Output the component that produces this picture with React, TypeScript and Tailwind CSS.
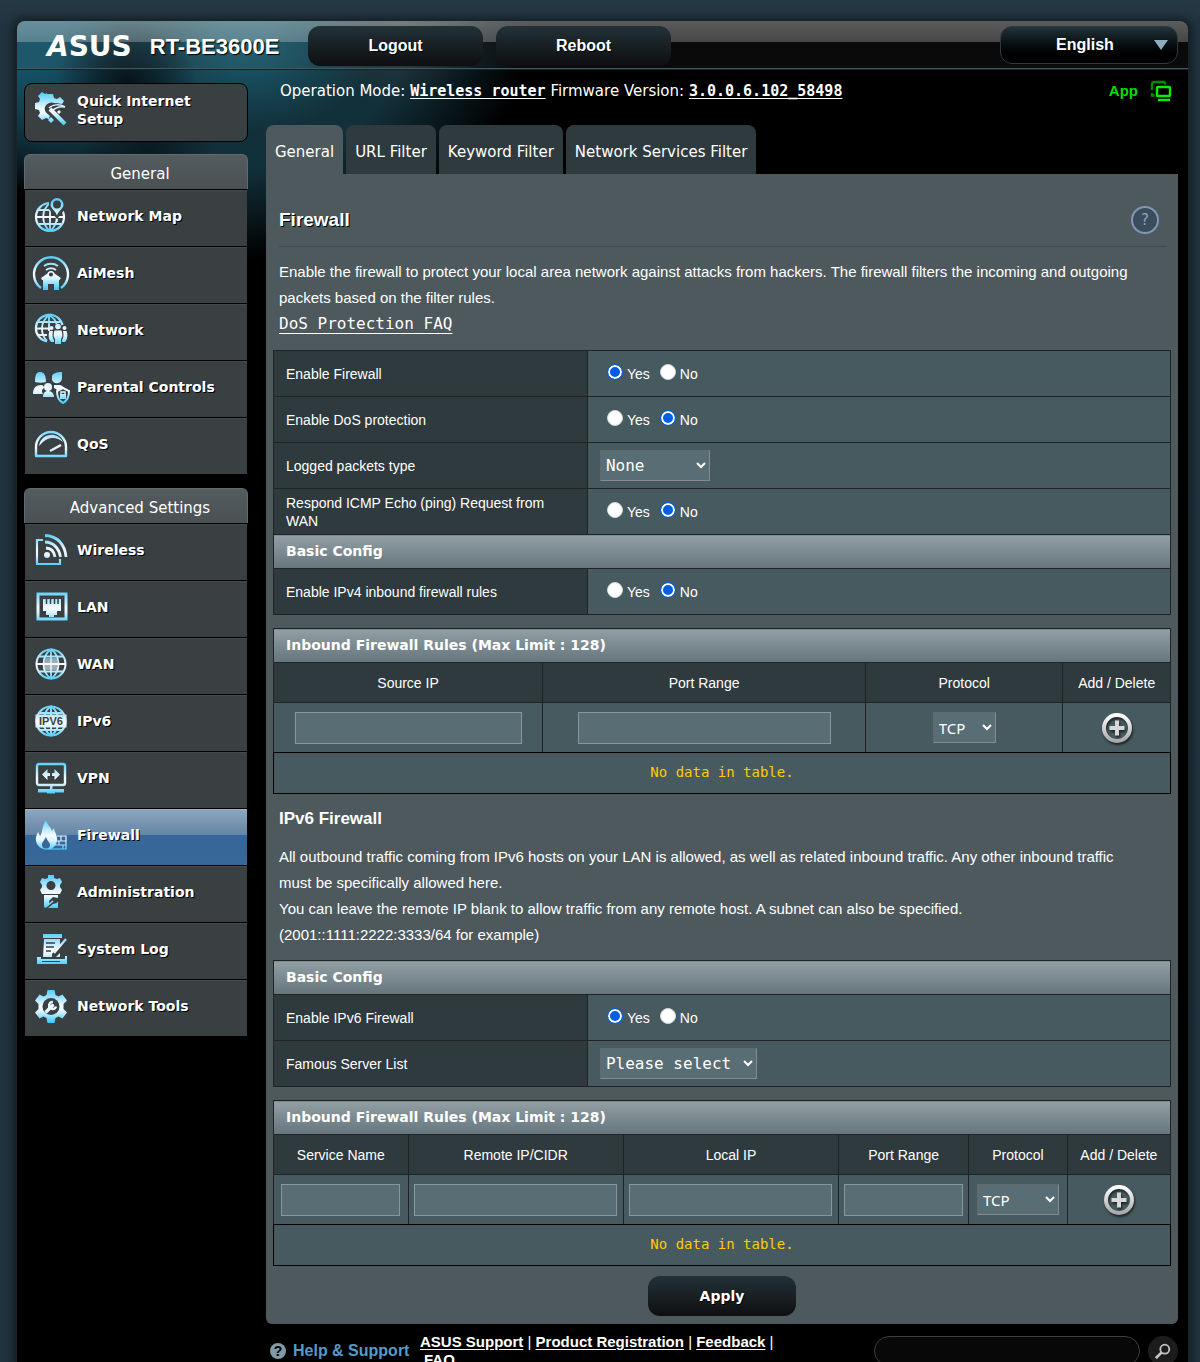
import React from "react";

const sans = "font-['Liberation_Sans',Arial,sans-serif]";
const wide = "font-['DejaVu_Sans',Verdana,sans-serif]";
const mono = "font-['DejaVu_Sans_Mono','Lucida_Console',monospace]";
const G = "url(#ice)";

const Gradients = () => (
  <svg width="0" height="0" className="absolute" aria-hidden="true">
    <defs>
      <linearGradient id="ice" gradientUnits="userSpaceOnUse" x1="0" y1="3" x2="0" y2="35">
        <stop offset="0" stopColor="#55cdf8" />
        <stop offset="0.5" stopColor="#f4faff" />
        <stop offset="0.65" stopColor="#e4f6ff" />
        <stop offset="1" stopColor="#3fccff" />
      </linearGradient>
      <linearGradient id="silver" x1="0" y1="0" x2="0" y2="1">
        <stop offset="0" stopColor="#ffffff" />
        <stop offset="1" stopColor="#a9a9a9" />
      </linearGradient>
    </defs>
  </svg>
);

const Icon = ({ children }: { children: React.ReactNode }) => (
  <svg viewBox="0 0 38 38" className="mb-0.5 size-[38px] shrink-0 [text-shadow:none]" fill="none" stroke={G} strokeWidth="2" aria-hidden="true">
    {children}
  </svg>
);

const gear = "M15.500 3h7l1 5 3 1.500 4-2 4.500 6-3.500 3.500v5l3.500 3.500-4.500 6-4-2-3 1.500-1 5h-7l-1-5-3-1.500-4 2-4.500-6 3.500-3.500v-5l-3.500-3.500 4.500-6 4 2 3-1.500z";

const icons: Record<string, React.ReactNode> = {
  setup: (
    <>
      <path fill={G} stroke="none" d="M15 4h6l1 4 3 1 3-2 4 4-2 3-6-1-7 3-2 5 3 4-1 4-3-1-4 2-4-4 2-3-1-3-4-1v-6l4-1 1-3-2-3 4-4 3 2 2-1z" />
      <path fill="#3a3f41" stroke="none" d="M13 17c2-5 9-6 12-2l8 1-5 3 5 12-4 3-12-9c-3-2-5-5-4-8z" />
      <path d="M18 19l15 15" strokeWidth="4" />
      <path d="M17 18c4-4 11-4 16-1-5-1-9 0-13 4" strokeWidth="1.500" />
      <path fill={G} stroke="none" d="M19 27l3 3-3 3-3-3zM27 20l2 2-2 2-2-2z" />
    </>
  ),
  map: (
    <>
      <circle cx="18" cy="20" r="14" strokeWidth="2.200" />
      <path d="M18 6v28M4 20h28M7 13h18M7 27h22M18 6c-9 7-9 21 0 28M18 6c9 7 9 21 0 28" strokeWidth="1.800" />
      <path fill="#3a3f41" stroke="none" d="M17 0h17v11l-9 11-8-10z" />
      <path fill={G} stroke="none" fillRule="evenodd" d="M25 1a6.500 6.500 0 0 1 6.500 6.500c0 4-5 6-6.500 11-1.500-5-6.500-7-6.500-11a6.500 6.500 0 0 1 6.500-6.500zm0 2.500a4 4 0 1 0 0 8 4 4 0 0 0 0-8z" />
      <path d="M25 22v3M22 27h7" strokeWidth="1.600" />
    </>
  ),
  aimesh: (
    <>
      <path d="M9 34A17 17 0 1 1 29 34" strokeWidth="2.400" />
      <path d="M12 12c4-3 10-3 14 0M14 16c3-2 7-2 10 0" strokeWidth="2" />
      <path fill={G} stroke="none" d="M19 17l10 7-1.500 2H27v10h-5v-6h-6v6h-5V26H10l-1-2z" />
      <circle cx="19" cy="20.500" r="2.800" fill="#3a3f41" strokeWidth="1.500" />
    </>
  ),
  network: (
    <>
      <path d="M15 30.500A13.500 13.500 0 1 1 30.500 14" strokeWidth="2.200" />
      <path d="M17 4v16M4 17.500h14M6 11h22M6 24h9M17 4c-9 7-9 19-2 26M17 4c5 3 7 6 7.500 9" strokeWidth="1.800" />
      <g fill={G} stroke="none">
        <circle cx="26" cy="15.500" r="2.800" />
        <circle cx="19.500" cy="17" r="2" />
        <circle cx="32.500" cy="17" r="2" />
        <path d="M22.500 19.500h7c1.500 4 1 7-.5 8.500V33h-6v-5c-1.500-1.500-2-4.500-.5-8.500zM17.500 20H21c-1 4-.5 7 1 9v2h-3c-2.500-2-3-8-1.500-11zM31 20h3.500c1.500 3 1 9-1.500 11h-3v-2c1.500-2 2-5 1-9z" />
      </g>
    </>
  ),
  parental: (
    <g fill={G} stroke="none">
      <path d="M3 14c0-8 2-10 5-10s6 2 6 10c-3 1-7 1-11 0zM20 8c1-3 5-4 10-4v7c-1 5-8 6-10 1z" />
      <path d="M1 26c0-6 3-9 8-9 2 0 3 1 3 3-3 2-2 4-1 6zM22 17h5c3 0 5 2 5 4l-6 4c0-3-2-4-4-5z" />
      <circle cx="16" cy="19" r="4" />
      <path d="M11 29c0-4 2-6 5-6s6 2 6 6z" />
      <path fill="#3a3f41" stroke={G} strokeWidth="2" d="M31 20l6 3c0 6-2 10-6 12-4-2-6-6-6-12z" />
      <rect x="28" y="26" width="6" height="5" />
      <path fill="none" stroke={G} strokeWidth="1.400" d="M29 27v-3h4v3" />
    </g>
  ),
  qos: (
    <>
      <path d="M4 31h30v-9a15 15 0 0 0-30 0z" strokeWidth="2.400" strokeLinejoin="round" />
      <path fill={G} stroke="none" d="M7 21c2-13 18-15 24-4-7-6-16-6-24 4z" />
      <path d="M18 26l11-6" strokeWidth="2.400" />
    </>
  ),
  wireless: (
    <>
      <path d="M11 9H5v24h23v-5" strokeWidth="2.200" />
      <circle cx="15" cy="24" r="3" fill={G} stroke="none" />
      <path d="M14 17c5 0 8 3 9 9M13 11c8 0 14 6 15.500 15M13 4.500c12 0 20 9 21 21.500" strokeWidth="2.800" />
    </>
  ),
  lan: (
    <>
      <rect x="6" y="6" width="28" height="25" strokeWidth="3" />
      <path fill={G} stroke="none" d="M11 11h18v12h-4v4h-3v2h-5v-2h-3v-4h-3z" />
      <path d="M14.500 10v6M18.500 10v6M22.500 10v6M26 10v6" stroke="#3a3f41" strokeWidth="1.500" />
    </>
  ),
  wan: (
    <>
      <circle cx="19" cy="19" r="14.500" />
      <path d="M19 4v30M4 19h30M7 11.500h24M7 26.500h24M19 4c-10 8-10 22 0 30M19 4c10 8 10 22 0 30" strokeWidth="1.800" />
      <path fill={G} stroke="none" opacity="0.6" d="M13 13h5v5h-5.500zM20 13h5l.5 5H20zM12.500 20H18v5h-5zM20 20h5.500l-.5 5h-5z" />
    </>
  ),
  ipv6: (
    <>
      <circle cx="19" cy="19" r="14.500" strokeWidth="2.200" />
      <path d="M19 4v30M7 11h24M7 28h24M19 4c-10 8-10 22 0 30M19 4c10 8 10 22 0 30" />
      <rect x="3.500" y="12.500" width="31" height="13" fill={G} stroke="none" />
      <text x="19" y="23" textAnchor="middle" fontSize="11" fontWeight="700" fontFamily="Liberation Sans" fill="#3a3f41" stroke="none">IPV6</text>
    </>
  ),
  vpn: (
    <>
      <rect x="5" y="5" width="28" height="21" rx="2" strokeWidth="2.400" />
      <path fill={G} stroke="none" d="M15.500 10v4H18v3h-2.500v4L10 15.500zM22.500 10v4H20v3h2.500v4l5.500-5.500zM18 26h2.500v4H32v3.500H23v1h-8v-1H6V30h12z" />
    </>
  ),
  firewall: (
    <>
      <path fill={G} stroke="none" fillRule="evenodd" d="M14 4c1 5 5 7 6 11l2-3c0 4 4 7 3 13-1 5-4 7-6 8h-7c-6-1-9-7-8-12l2-5 2 4c3-3 1-8 6-16zm0 17c-2 4-4 5-4 8 0 2 2 4 4 4s4-2 4-4c0-3-3-4-4-8z" />
      <path d="M25 20h9v13H12M24 25h10M23 29h11M29 20v5M27 25v4M31 29v4" strokeWidth="1.200" />
    </>
  ),
  admin: (
    <>
      <path fill={G} stroke="none" fillRule="evenodd" d="M16 2h6v3l3 1 3-1 2 4-2 3v2l2 3-2 4H10l-2-4 2-3v-2L8 9l2-4 3 1 3-1zm3 6a4.500 4.500 0 1 0 0 9 4.500 4.500 0 0 0 0-9z" />
      <path fill={G} stroke="none" d="M12 22h14v3l-5-1-4 4 .5 3L13 35l-1-1zM26 28v7H16l5-4 4-1z" />
      <path d="M14 34l7-6" strokeWidth="1.400" />
    </>
  ),
  log: (
    <>
      <path fill={G} stroke="none" d="M11 4h19v4H11zM12 9h16v6l-8 9v3h4l4-4v4H11z" />
      <path d="M14 13h9M14 17h8M14 21h5" stroke="#3a3f41" strokeWidth="1.500" />
      <path d="M22 23l12-14" strokeWidth="2.200" />
      <path fill={G} stroke="none" d="M5 27h4v2h24v-3h2v8H5z" />
      <path d="M10 31.500h18" stroke="#3a3f41" strokeWidth="1" />
    </>
  ),
  tools: (
    <>
      <path fill={G} stroke="none" d={gear} />
      <circle cx="19" cy="19.500" r="8.500" fill="#3a3f41" stroke="none" />
      <path d="M14.500 24.500l6-6" strokeWidth="3.400" strokeLinecap="round" />
      <path d="M21 15a3.500 3.500 0 1 0 3 4.500" strokeWidth="2.400" />
    </>
  ),
};

const general = [
  ["map", "Network Map"],
  ["aimesh", "AiMesh"],
  ["network", "Network"],
  ["parental", "Parental Controls"],
  ["qos", "QoS"],
];

const advanced = [
  ["wireless", "Wireless"],
  ["lan", "LAN"],
  ["wan", "WAN"],
  ["ipv6", "IPv6"],
  ["vpn", "VPN"],
  ["firewall", "Firewall"],
  ["admin", "Administration"],
  ["log", "System Log"],
  ["tools", "Network Tools"],
];

const Menu = ({ title, items }: { title: string; items: string[][] }) => (
  <nav className="mb-[14px]">
    <h2 className={`${wide} h-[35px] rounded-t-md border border-b-0 border-[#626a6d] bg-linear-to-b from-[#555c5f] to-[#4a5154] pt-1 pl-2 text-center text-[15px]/[30px]`}>
      {title}
    </h2>
    <ul className="mx-px">
      {items.map(([icon, label]) => (
        <li key={label} className="h-[57px] border-t border-black">
          <a
            href="#"
            className={`${wide} flex h-14 items-center gap-[7px] border-t pb-1 pl-[7px] text-[14px] font-bold [text-shadow:1px_1px_0_#000] ${
              label === "Firewall"
                ? "border-[#9fb4c6] bg-[linear-gradient(#8aa5be,#6485a6_46%,#37669a_46%,#376897)]"
                : "border-[#454a4c] bg-[#3a3f41]"
            }`}
          >
            <Icon>{icons[icon]}</Icon>
            {label}
          </a>
        </li>
      ))}
    </ul>
  </nav>
);

const YesNo = ({ name, label, value }: { name: string; label: string; value: "Yes" | "No" }) => (
  <div role="radiogroup" aria-label={label} className="flex items-center gap-[10px] pl-[7px]">
    {["Yes", "No"].map((opt) => (
      <label key={opt} className="flex items-center gap-1">
        <input
          type="radio"
          name={name}
          defaultChecked={opt === value}
          className="mb-[3px] size-4 appearance-none rounded-full border border-[#d5d8da] bg-white checked:border-[#005fe0] checked:bg-[#005fe0] checked:shadow-[inset_0_0_0_2px_#fff]"
        />
        {opt}
      </label>
    ))}
  </div>
);

const Row = ({ label, id, children }: { label: string; id?: string; children: React.ReactNode }) => (
  <tr className="h-[46px]">
    <th scope="row" className="w-[35%] border border-[#222] bg-[#2f3a3e] px-3 text-left text-[14px]/[18px] font-normal">
      {id ? <label htmlFor={id}>{label}</label> : label}
    </th>
    <td className="border border-[#222] bg-[#475a5f] px-3 text-[14px]/[18px]">{children}</td>
  </tr>
);

const Bar = ({ children, span }: { children: React.ReactNode; span: number }) => (
  <tr className="h-[34px]">
    <th
      colSpan={span}
      className={`${wide} border border-[#222] bg-linear-to-b from-[#92a0a5] to-[#66757c] px-3 text-left text-[14px] font-bold`}
    >
      {children}
    </th>
  </tr>
);

const selectStyle = "h-[31px] border border-t-[#5f6a6e] border-l-[#5f6a6e] border-[#8a8a8a] bg-[#596d74] px-px";
const HeadCell = ({ children }: { children: React.ReactNode }) => (
  <th scope="col" className="border border-[#222] bg-[#2f3a3e] text-[14px]/[18px] font-normal">{children}</th>
);
const Cell = ({ children }: { children: React.ReactNode }) => (
  <td className="border border-[#222] bg-[#475a5f] text-center">
    <div className="flex items-center justify-center">{children}</div>
  </td>
);
const Field = ({ label, width }: { label: string; width: string }) => (
  <input type="text" aria-label={label} className={`${width} h-8 border border-[#85989e] bg-[#596d74] px-1`} />
);

const AddButton = () => (
  <button type="button" aria-label="Add" className="size-8 drop-shadow-[1px_2px_1px_rgba(0,0,0,0.6)]">
    <svg viewBox="0 0 32 32" fill="none" stroke="url(#silver)">
      <circle cx="16" cy="16" r="13" strokeWidth="4" />
      <path fill="#d8d8d8" stroke="none" d="M14 8.500h4V14h5.500v4H18v5.500h-4V18H8.500v-4H14z" />
    </svg>
  </button>
);

const NoData = () => (
  <p className={`${mono} -mt-px h-[42px] border border-black bg-[#475a5f] text-center text-[14px]/[38px] text-[#ffcc00]`}>
    No data in table.
  </p>
);

const darkButton = "h-[40px] rounded-xl bg-linear-to-b from-[#233238] to-[#0e0f10] text-center font-bold [text-shadow:1px_1px_0_#000]";

const Header = () => (
  <header className="flex h-12 rounded-t-lg border-b border-[#3f5a63] bg-[linear-gradient(rgba(255,255,255,0.36),rgba(255,255,255,0.28)_21px,rgba(255,255,255,0.04)_21px,rgba(255,255,255,0.04))] shadow-[0_1px_0_#142328]">
    <div className="flex w-[291px] shrink-0 items-center gap-[18px] pt-1 pl-[30px]">
      <span className={`${wide} text-[28px]/[28px] font-bold`}><i>A</i>SUS</span>
      <span className="text-[22px]/[24px] font-bold [text-shadow:1px_1px_1px_#000]">RT-BE3600E</span>
    </div>
    <div className="flex flex-1 gap-[13px] pt-[5px]">
      <button type="button" className={`${darkButton} w-[175px]`}>Logout</button>
      <button type="button" className={`${darkButton} w-[175px]`}>Reboot</button>
    </div>
    <div className="relative mt-[5px] mr-[10px] h-[38px] w-[178px]">
      <select
        aria-label="Language"
        className="size-full appearance-none rounded-xl border border-[#2c3a3f] bg-linear-to-b from-[#22343a] to-black pr-2 [text-align-last:center] font-bold"
      >
        <option>English</option>
      </select>
      <svg viewBox="0 0 14 10" className="pointer-events-none absolute top-[14px] right-[10px] h-[10px] w-[14px]" fill="#8fa9bd">
        <path d="M0 0h14l-7 10z" />
      </svg>
    </div>
  </header>
);

const tabs = ["General", "URL Filter", "Keyword Filter", "Network Services Filter"];

const StatusLine = () => (
  <div className="flex items-center justify-between pt-[10px] pr-[6px] pl-[14px]">
    <p className={`${wide} text-[15px]/6`}>
      Operation Mode:{" "}
      <a href="#" className={`${mono} text-[15px] font-bold underline underline-offset-2`}>Wireless router</a>{" "}
      Firmware Version:{" "}
      <a href="#" className={`${mono} text-[15px] font-bold underline underline-offset-2`}>3.0.0.6.102_58498</a>
    </p>
    <a href="#" className="flex items-center gap-3 text-[15px] font-bold text-[#00dd00]">
      App
      <svg viewBox="0 0 22 22" className="size-[22px]" fill="none" stroke="#00f000" strokeWidth="2.400">
        <rect x="7" y="7" width="13" height="9" rx="1" />
        <path d="M8 20h12" />
        <path d="M15 4.500V3q0-1-1-1H4Q2 2 2 4v6M2 13v2.500h2.500" stroke="#008a00" />
      </svg>
    </a>
  </div>
);

const Firewall = () => (
  <main className="rounded-b-md bg-[#4d595d] px-[7px] pb-[8px]">
    <div className="mx-1.5 mr-1 flex items-center justify-between border-b border-[#3f4a4e] pt-[32px] pr-[8px] pb-[12px]">
      <h1 className="text-[19px]/6 font-bold [text-shadow:1px_1px_0_#000]">Firewall</h1>
      <button type="button" aria-label="Help" className={`${wide} size-[28px] rounded-full border-2 border-[#8197b5] bg-[#3b4d5c] text-[15px]/[24px] text-[#8da3c2]`}>
        ?
      </button>
    </div>
    <p className="mt-3 pr-6 pl-1.5 text-[15px]/[26px]">
      Enable the firewall to protect your local area network against attacks from hackers. The firewall filters the incoming and outgoing packets based on the filter rules.
      <br />
      <a href="#" className={`${mono} text-[16px] underline underline-offset-4`}>DoS Protection FAQ</a>
    </p>

    <table className="mt-[13px] w-full border-collapse">
      <tbody>
        <Row label="Enable Firewall"><YesNo name="fw" label="Enable Firewall" value="Yes" /></Row>
        <Row label="Enable DoS protection"><YesNo name="dos" label="Enable DoS protection" value="No" /></Row>
        <Row label="Logged packets type" id="logged">
          <select id="logged" className={`${selectStyle} ${mono} w-[110px] text-[16px]`}>
            <option>None</option>
          </select>
        </Row>
        <Row label="Respond ICMP Echo (ping) Request from WAN"><YesNo name="ping" label="Respond to ping" value="No" /></Row>
        <Bar span={2}>Basic Config</Bar>
        <Row label="Enable IPv4 inbound firewall rules"><YesNo name="v4" label="Enable IPv4 inbound firewall rules" value="No" /></Row>
      </tbody>
    </table>

    <table className="mt-[13px] w-full table-fixed border-collapse">
      <colgroup>
        <col className="w-[30%]" />
        <col className="w-[36%]" />
        <col className="w-[22%]" />
        <col className="w-[12%]" />
      </colgroup>
      <thead>
        <Bar span={4}>Inbound Firewall Rules (Max Limit : 128)</Bar>
        <tr className="h-10">
          <HeadCell>Source IP</HeadCell>
          <HeadCell>Port Range</HeadCell>
          <HeadCell>Protocol</HeadCell>
          <HeadCell>Add / Delete</HeadCell>
        </tr>
      </thead>
      <tbody>
        <tr className="h-[50px]">
          <Cell><Field label="Source IP" width="w-[227px]" /></Cell>
          <Cell><Field label="Port Range" width="w-[253px]" /></Cell>
          <Cell>
            <select aria-label="Protocol" className={`${selectStyle} w-[63px] font-['Noto_Sans',sans-serif] text-[15px]`}>
              <option>TCP</option>
            </select>
          </Cell>
          <Cell><AddButton /></Cell>
        </tr>
      </tbody>
    </table>
    <NoData />

    <h2 className="mt-3 px-1.5 text-[17px]/[26px] font-bold">IPv6 Firewall</h2>
    <p className="mt-3 pr-6 pl-1.5 text-[15px]/[26px]">
      All outbound traffic coming from IPv6 hosts on your LAN is allowed, as well as related inbound traffic. Any other inbound traffic must be specifically allowed here.
      <br />
      You can leave the remote IP blank to allow traffic from any remote host. A subnet can also be specified.
      <br />
      (2001::1111:2222:3333/64 for example)
    </p>

    <table className="mt-3 w-full border-collapse">
      <tbody>
        <Bar span={2}>Basic Config</Bar>
        <Row label="Enable IPv6 Firewall"><YesNo name="v6" label="Enable IPv6 Firewall" value="Yes" /></Row>
        <Row label="Famous Server List" id="famous">
          <select id="famous" className={`${selectStyle} ${mono} w-[157px] text-[16px]`}>
            <option>Please select</option>
          </select>
        </Row>
      </tbody>
    </table>

    <table className="mt-[13px] w-full table-fixed border-collapse">
      <colgroup>
        <col className="w-[15%]" />
        <col className="w-[24%]" />
        <col className="w-[24%]" />
        <col className="w-[14.500%]" />
        <col className="w-[11%]" />
        <col className="w-[11.500%]" />
      </colgroup>
      <thead>
        <Bar span={6}>Inbound Firewall Rules (Max Limit : 128)</Bar>
        <tr className="h-10">
          <HeadCell>Service Name</HeadCell>
          <HeadCell>Remote IP/CIDR</HeadCell>
          <HeadCell>Local IP</HeadCell>
          <HeadCell>Port Range</HeadCell>
          <HeadCell>Protocol</HeadCell>
          <HeadCell>Add / Delete</HeadCell>
        </tr>
      </thead>
      <tbody>
        <tr className="h-[50px]">
          <Cell><Field label="Service Name" width="w-[119px]" /></Cell>
          <Cell><Field label="Remote IP/CIDR" width="w-[203px]" /></Cell>
          <Cell><Field label="Local IP" width="w-[203px]" /></Cell>
          <Cell><Field label="Port Range" width="w-[119px]" /></Cell>
          <Cell>
            <select aria-label="Protocol" className={`${selectStyle} w-[82px] font-['Noto_Sans',sans-serif] text-[15px]`}>
              <option>TCP</option>
            </select>
          </Cell>
          <Cell><AddButton /></Cell>
        </tr>
      </tbody>
    </table>
    <NoData />

    <div className="mt-[10px] flex justify-center">
      <button type="button" className={`${darkButton} ${wide} w-[148px] text-[14px]`}>Apply</button>
    </div>
  </main>
);

const footLink = "underline underline-offset-2";

const Footer = () => (
  <footer className="flex items-start pl-1 text-[15px]/[18px] font-bold">
    <a href="#" className="flex w-[150px] shrink-0 items-center gap-[7px] pt-[18px] text-[16px] text-[#569ac7]">
      <span className="size-4 rounded-full bg-[#7f9ba6] text-center text-[14px]/4 text-black">?</span>
      Help &amp; Support
    </a>
    <p className="w-[376px] pt-[9px]">
      <a href="#" className={footLink}>ASUS Support</a> <span className="font-normal">|</span>{" "}
      <a href="#" className={footLink}>Product Registration</a> <span className="font-normal">|</span>{" "}
      <a href="#" className={footLink}>Feedback</a> <span className="font-normal">|</span>{" "}
      <a href="#" className={`${footLink} ml-1`}>FAQ</a>
    </p>
    <div className="ml-auto flex gap-2 pt-3">
      <input type="search" aria-label="Search FAQ" className="h-[30px] w-[266px] rounded-full border border-[#3d3d3d] bg-[#080808] px-4" />
      <button type="button" aria-label="Search" className="flex size-[30px] items-center justify-center rounded-full bg-[#1c1c1c]">
        <svg viewBox="0 0 20 20" className="size-[18px]" fill="none" stroke="#c4c4c4" strokeWidth="2">
          <circle cx="12" cy="8" r="5" />
          <path d="M8.500 11.500L2 18" strokeWidth="3" />
        </svg>
      </button>
    </div>
  </footer>
);

export default function App() {
  return (
    <div className={`${sans} h-screen overflow-x-hidden bg-[#21323d] bg-linear-to-b from-[#253946] via-[#21333e] via-2% to-[#21333e] pt-[21px] pr-[11px] pl-4 text-[16px] text-white`}>
      <Gradients />
      <div className="min-h-full rounded-t-lg border-x border-[#1b2326] bg-black bg-[radial-gradient(ellipse_70px_60px_at_110px_60px,rgba(6,16,22,0.9),transparent),radial-gradient(ellipse_70px_60px_at_130px_130px,rgba(6,16,22,0.7),transparent),radial-gradient(ellipse_90px_90px_at_380px_0,rgba(90,60,55,0.35),transparent),radial-gradient(ellipse_130px_90px_at_230px_20px,#1a5566_20%,transparent),radial-gradient(ellipse_150px_170px_at_0_0,#155064_30%,transparent),radial-gradient(ellipse_300px_230px_at_210px_10px,#12303a_60%,transparent)] bg-no-repeat shadow-[0_0_8px_3px_rgba(0,0,0,0.45)]">
        <Header />
        <div className="flex gap-[18px] pr-[10px] pl-[7px]">
          <aside className="w-56 shrink-0 pt-[14px]">
            <a href="#" className={`${wide} mb-3 flex h-[59px] items-center gap-[7px] rounded-lg border border-black bg-[#3a3f41] pb-1.5 pl-[7px] text-[14px]/[18px] font-bold [text-shadow:1px_1px_0_#000]`}>
              <Icon>{icons.setup}</Icon>
              <span>Quick Internet<br />Setup</span>
            </a>
            <Menu title="General" items={general} />
            <Menu title="Advanced Settings" items={advanced} />
          </aside>
          <div className="min-w-0 flex-1">
            <StatusLine />
            <div role="tablist" className="mt-[22px] flex gap-[3px]">
              {tabs.map((tab, i) => (
                <button
                  key={tab}
                  type="button"
                  role="tab"
                  aria-selected={i === 0}
                  className={`${wide} h-[49px] rounded-t-lg px-[9px] pt-1.5 text-[15px] ${i === 0 ? "bg-[#4d595d]" : "bg-[#2f3a3e]"}`}
                >
                  {tab}
                </button>
              ))}
            </div>
            <Firewall />
            <Footer />
          </div>
        </div>
      </div>
    </div>
  );
}
